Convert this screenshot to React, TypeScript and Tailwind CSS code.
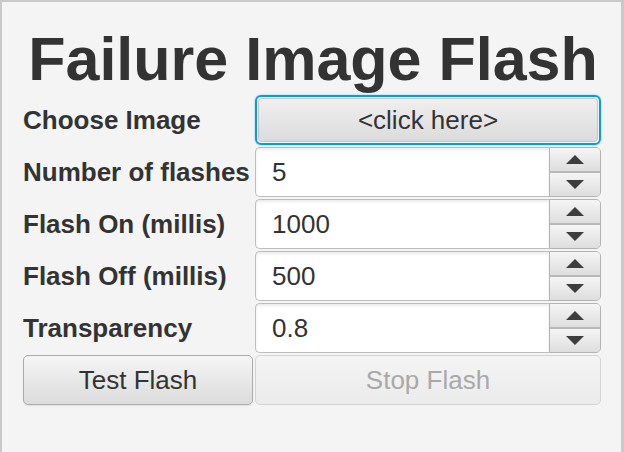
import React from 'react'

const font = { fontFamily: '"Liberation Sans", Arial, sans-serif' }

function Arrow({ up }: { up?: boolean }) {
  return (
    <svg width="18" height="9" viewBox="0 0 18 9">
      <path d={up ? 'M9 0 L18 9 L0 9 Z' : 'M0 0 L18 0 L9 9 Z'} fill="#3d3d3d" />
    </svg>
  )
}

function Label({ children }: { children: React.ReactNode }) {
  return (
    <div className="flex items-center h-[50px] text-[26px] font-bold text-[#333] whitespace-nowrap">
      {children}
    </div>
  )
}

function Spinner({ value }: { value: string }) {
  return (
    <div className="flex h-[50px]">
      <div className="flex-1 flex items-center pl-[16px] bg-white border border-[#bdbdbd] border-r-0 rounded-l-[5px] shadow-[inset_0_2px_3px_rgba(0,0,0,0.08)] text-[26px] text-[#333]">
        {value}
      </div>
      <div className="w-[52px] flex flex-col border border-[#b3b3b3] rounded-r-[5px] overflow-hidden">
        <div className="flex-1 flex items-center justify-center bg-gradient-to-b from-[#f5f5f5] to-[#dedede] border-b-2 border-[#b8b8b8]">
          <Arrow up />
        </div>
        <div className="flex-1 flex items-center justify-center bg-gradient-to-b from-[#f5f5f5] to-[#dedede]">
          <Arrow />
        </div>
      </div>
    </div>
  )
}

export default function App() {
  const rows: [string, string][] = [
    ['Number of flashes', '5'],
    ['Flash On (millis)', '1000'],
    ['Flash Off (millis)', '500'],
    ['Transparency', '0.8'],
  ]

  return (
    <div
      style={font}
      className="w-[624px] h-[452px] bg-[#f4f4f4] border-t-2 border-l-2 border-r-[3px] border-[#c9c9c9] flex flex-col"
    >
      <h1 className="mt-[27px] text-center text-[61px] leading-[60px] font-bold text-[#333] pl-[3px]">
        Failure Image Flash
      </h1>
      <div className="mt-[6px] ml-[21px] mr-[20px] grid grid-cols-[230px_1fr] gap-x-[2px] gap-y-[2px]">
        <Label>Choose Image</Label>
        <div className="h-[50px] rounded-[6px] border-2 border-[#0a9bd8] p-[1px] shadow-[0_0_2px_rgba(10,155,216,0.5)]">
          <div className="h-full rounded-[4px] bg-gradient-to-b from-[#efefef] to-[#dcdcdc] border border-[#c6c6c6] flex items-center justify-center text-[26px] text-[#333]">
            &lt;click here&gt;
          </div>
        </div>
        {rows.map(([label, value]) => (
          <React.Fragment key={label}>
            <Label>{label}</Label>
            <Spinner value={value} />
          </React.Fragment>
        ))}
        <div className="h-[50px] rounded-[5px] border border-[#ababab] bg-gradient-to-b from-[#f5f5f5] to-[#dcdcdc] flex items-center justify-center text-[26px] text-[#333] shadow-[0_1px_1px_rgba(0,0,0,0.08)]">
          Test Flash
        </div>
        <div className="h-[50px] rounded-[5px] border border-[#d4d4d4] bg-gradient-to-b from-[#f4f4f4] to-[#ebebeb] flex items-center justify-center text-[26px] text-[#a9a9a9]">
          Stop Flash
        </div>
      </div>
    </div>
  )
}
